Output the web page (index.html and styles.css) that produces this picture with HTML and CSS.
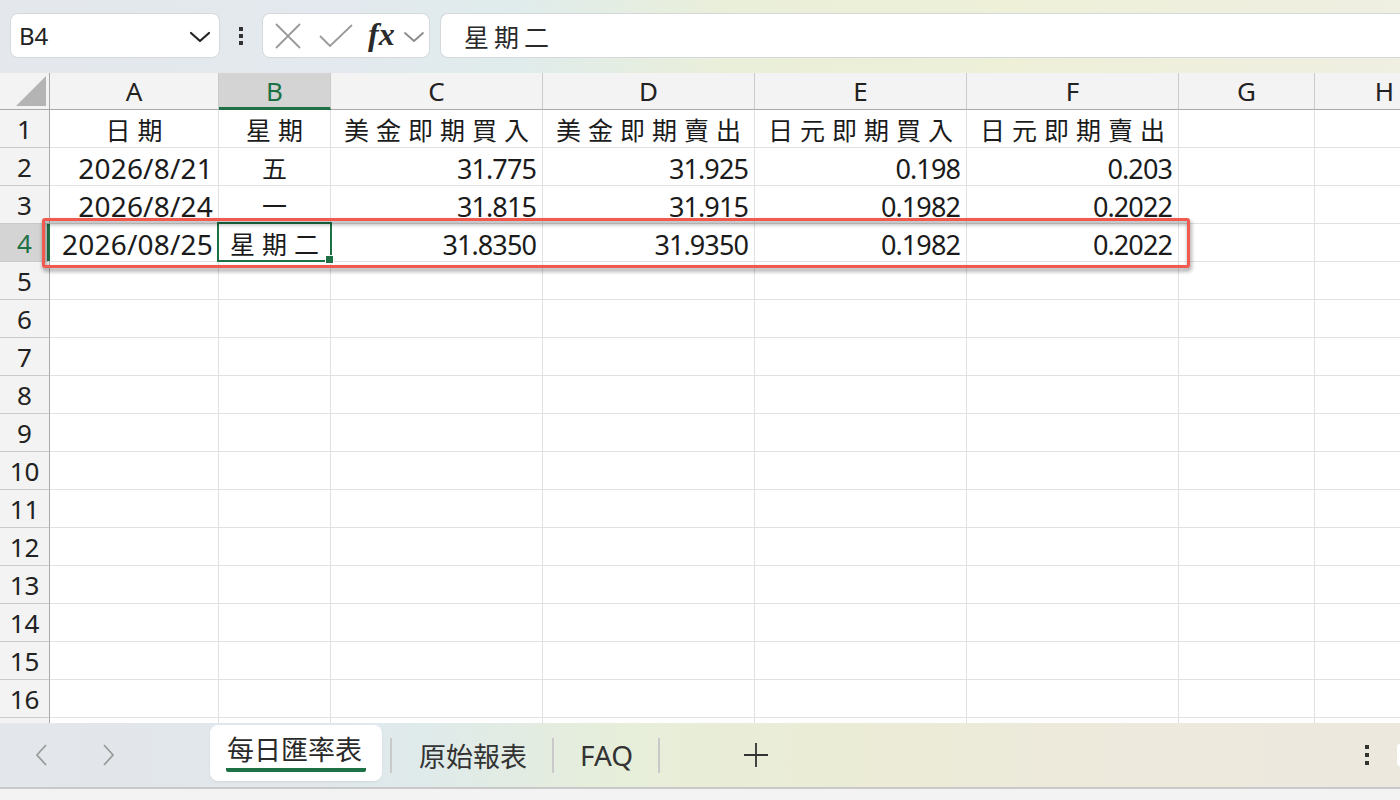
FILE: index.html
```html
<!DOCTYPE html>
<html lang="zh-Hant">
<head>
<meta charset="utf-8">
<title>每日匯率表</title>
<link rel="stylesheet" href="styles.css">
</head>
<body>
<div class="toolbar">
  <div class="namebox">
    <span class="nb-text">B4</span>
    <svg class="chev" width="22" height="14" viewBox="0 0 22 14"><path d="M2 3 L11 11 L20 3" fill="none" stroke="#222" stroke-width="2.2" stroke-linecap="round" stroke-linejoin="round"/></svg>
  </div>
  <div class="dots"><span></span><span></span><span></span></div>
  <div class="fxbox">
    <svg class="ico-x" width="28" height="28" viewBox="0 0 28 28"><path d="M2 2 L26 26 M26 2 L2 26" stroke="#9a9a9a" stroke-width="1.8" fill="none"/></svg>
    <svg class="ico-ok" width="36" height="26" viewBox="0 0 36 26"><path d="M2 13 L12 23 L34 2" stroke="#9a9a9a" stroke-width="1.8" fill="none"/></svg>
    <span class="fx">fx</span>
    <svg class="ico-dd" width="22" height="14" viewBox="0 0 22 14"><path d="M2 3 L11 11 L20 3" fill="none" stroke="#8a8a8a" stroke-width="1.8" stroke-linecap="round" stroke-linejoin="round"/></svg>
  </div>
  <div class="formula">星期二</div>
</div>

<div class="sheet">
  <div class="grid">
    <div class="corner"></div>
    <div class="ch">A</div><div class="ch sel">B</div><div class="ch">C</div><div class="ch">D</div><div class="ch">E</div><div class="ch">F</div><div class="ch">G</div><div class="ch">H</div>

    <div class="rh">1</div>
    <div class="c cjk">日期</div><div class="c cjk">星期</div><div class="c cjk">美金即期買入</div><div class="c cjk">美金即期賣出</div><div class="c cjk">日元即期買入</div><div class="c cjk">日元即期賣出</div><div class="c"></div><div class="c"></div>

    <div class="rh">2</div>
    <div class="c num">2026/8/21</div><div class="c cjk">五</div><div class="c num dec">31.775</div><div class="c num dec">31.925</div><div class="c num dec">0.198</div><div class="c num dec">0.203</div><div class="c"></div><div class="c"></div>

    <div class="rh">3</div>
    <div class="c num">2026/8/24</div><div class="c cjk">一</div><div class="c num dec">31.815</div><div class="c num dec">31.915</div><div class="c num dec">0.1982</div><div class="c num dec">0.2022</div><div class="c"></div><div class="c"></div>

    <div class="rh sel">4</div>
    <div class="c num">2026/08/25</div><div class="c cjk cursor">星期二</div><div class="c num dec">31.8350</div><div class="c num dec">31.9350</div><div class="c num dec">0.1982</div><div class="c num dec">0.2022</div><div class="c"></div><div class="c"></div>

    <div class="rh">5</div><div class="c"></div><div class="c"></div><div class="c"></div><div class="c"></div><div class="c"></div><div class="c"></div><div class="c"></div><div class="c"></div>
    <div class="rh">6</div><div class="c"></div><div class="c"></div><div class="c"></div><div class="c"></div><div class="c"></div><div class="c"></div><div class="c"></div><div class="c"></div>
    <div class="rh">7</div><div class="c"></div><div class="c"></div><div class="c"></div><div class="c"></div><div class="c"></div><div class="c"></div><div class="c"></div><div class="c"></div>
    <div class="rh">8</div><div class="c"></div><div class="c"></div><div class="c"></div><div class="c"></div><div class="c"></div><div class="c"></div><div class="c"></div><div class="c"></div>
    <div class="rh">9</div><div class="c"></div><div class="c"></div><div class="c"></div><div class="c"></div><div class="c"></div><div class="c"></div><div class="c"></div><div class="c"></div>
    <div class="rh">10</div><div class="c"></div><div class="c"></div><div class="c"></div><div class="c"></div><div class="c"></div><div class="c"></div><div class="c"></div><div class="c"></div>
    <div class="rh">11</div><div class="c"></div><div class="c"></div><div class="c"></div><div class="c"></div><div class="c"></div><div class="c"></div><div class="c"></div><div class="c"></div>
    <div class="rh">12</div><div class="c"></div><div class="c"></div><div class="c"></div><div class="c"></div><div class="c"></div><div class="c"></div><div class="c"></div><div class="c"></div>
    <div class="rh">13</div><div class="c"></div><div class="c"></div><div class="c"></div><div class="c"></div><div class="c"></div><div class="c"></div><div class="c"></div><div class="c"></div>
    <div class="rh">14</div><div class="c"></div><div class="c"></div><div class="c"></div><div class="c"></div><div class="c"></div><div class="c"></div><div class="c"></div><div class="c"></div>
    <div class="rh">15</div><div class="c"></div><div class="c"></div><div class="c"></div><div class="c"></div><div class="c"></div><div class="c"></div><div class="c"></div><div class="c"></div>
    <div class="rh">16</div><div class="c"></div><div class="c"></div><div class="c"></div><div class="c"></div><div class="c"></div><div class="c"></div><div class="c"></div><div class="c"></div>
    <div class="rh"></div><div class="c"></div><div class="c"></div><div class="c"></div><div class="c"></div><div class="c"></div><div class="c"></div><div class="c"></div><div class="c"></div>
  </div>
  <div class="highlight"></div>
</div>

<div class="tabbar">
  <svg class="nav prev" width="16" height="24" viewBox="0 0 16 24"><path d="M12 2 L3 12 L12 22" fill="none" stroke="#9b9b9b" stroke-width="1.8"/></svg>
  <svg class="nav next" width="16" height="24" viewBox="0 0 16 24"><path d="M4 2 L13 12 L4 22" fill="none" stroke="#9b9b9b" stroke-width="1.8"/></svg>
  <div class="tab current"><span>每日匯率表</span></div>
  <div class="sep"></div>
  <div class="tab">原始報表</div>
  <div class="sep"></div>
  <div class="tab faq">FAQ</div>
  <div class="sep"></div>
  <svg class="plus" width="26" height="26" viewBox="0 0 26 26"><path d="M13 1 V25 M1 13 H25" stroke="#333" stroke-width="1.8"/></svg>
  <div class="spacer"></div>
  <div class="vdots"><span></span><span></span><span></span></div>
  <div class="edge"></div>
</div>
<div class="status"></div>
</body>
</html>
```

FILE: styles.css
```css
* { box-sizing: border-box; }
html, body { margin: 0; padding: 0; }
body {
  width: 1400px;
  height: 800px;
  overflow: hidden;
  background: #f3f3f3;
  font-family: "Noto Sans", "Noto Sans CJK TC", sans-serif;
  color: #1b1b1b;
}

/* ---------- toolbar ---------- */
.toolbar {
  height: 73px;
  display: flex;
  align-items: flex-start;
  padding: 13px 0 0 10px;
  background: linear-gradient(90deg, #e4e8ed 0%, #e3e9ee 25%, #e0ecec 37%, #eaefd9 52%, #eef0d8 72%, #efefe2 100%);
}
.namebox {
  width: 210px;
  height: 45px;
  background: #fff;
  border: 1px solid #d5d8db;
  border-radius: 8px;
  display: flex;
  align-items: center;
  justify-content: space-between;
  padding: 0 8px 0 8px;
}
.nb-text { font-size: 24px; color: #222; }
.chev { margin-top: 2px; }
.dots {
  width: 42px;
  height: 45px;
  display: flex;
  flex-direction: column;
  align-items: center;
  justify-content: center;
  gap: 3px;
}
.dots span { width: 4px; height: 4px; background: #333; }
.fxbox {
  width: 168px;
  height: 45px;
  background: #fff;
  border: 1px solid #d5d8db;
  border-radius: 8px;
  display: flex;
  align-items: center;
  padding-left: 11px;
}
.ico-ok { margin-left: 16px; }
.fx {
  margin-left: 14px;
  font-family: "Liberation Serif", "DejaVu Serif", serif;
  font-style: italic;
  font-weight: bold;
  font-size: 32px;
  color: #2a2a2a;
  line-height: 1;
  margin-top: -4px;
}
.ico-dd { margin-left: 8px; margin-top: 2px; }
.formula {
  flex: 1;
  margin-left: 10px;
  height: 45px;
  background: #fff;
  border: 1px solid #d5d8db;
  border-right: none;
  border-radius: 8px 0 0 8px;
  display: flex;
  align-items: center;
  padding-left: 23px;
  font-family: "Noto Sans CJK TC", sans-serif;
  font-size: 25px;
  letter-spacing: 5px;
  color: #2a2a2a;
}

/* ---------- sheet ---------- */
.sheet {
  position: relative;
  height: 650px;
  overflow: hidden;
  background: #fff;
}
.grid {
  display: grid;
  grid-template-columns: 50px 169px 112px 212px 212px 212px 212px 136px 140px;
  grid-template-rows: 37px repeat(17, 38px);
}
.corner {
  position: relative;
  background: #f3f3f3;
  border-right: 1px solid #a9a9a9;
  border-bottom: 1px solid #a9a9a9;
}
.corner::after {
  content: "";
  position: absolute;
  right: 3px;
  bottom: 3px;
  width: 30px;
  height: 30px;
  background: #b4b4b4;
  clip-path: polygon(100% 0, 100% 100%, 0 100%);
}
.ch {
  background: #f3f3f3;
  border-right: 1px solid #cacaca;
  border-bottom: 1px solid #a9a9a9;
  display: flex;
  align-items: center;
  justify-content: center;
  font-size: 26px;
  color: #222;
}
.ch.sel {
  background: #d4d4d4;
  color: #1e7145;
  border-bottom: 3px solid #1e7145;
  padding-top: 2px;
}
.rh {
  position: relative;
  background: #f3f3f3;
  border-right: 1px solid #a9a9a9;
  border-bottom: 1px solid #cacaca;
  display: flex;
  align-items: center;
  justify-content: center;
  font-size: 26px;
  color: #222;
}
.rh.sel { background: #d4d4d4; color: #1e7145; }
.rh.sel::after {
  content: "";
  position: absolute;
  right: -1px;
  top: 0;
  bottom: 0;
  width: 3px;
  background: #1e7145;
}
.c {
  border-right: 1px solid #e1e1e1;
  border-bottom: 1px solid #e1e1e1;
  display: flex;
  align-items: center;
  white-space: nowrap;
  overflow: visible;
}
.num {
  justify-content: flex-end;
  padding-right: 5px;
  padding-top: 3px;
  font-size: 28px;
  letter-spacing: 0.2px;
  color: #1b1b1b;
}
.num.dec {
  font-size: 27px;
  letter-spacing: -0.9px;
  padding-right: 6px;
}
.cjk {
  justify-content: center;
  font-family: "Noto Sans CJK TC", sans-serif;
  font-size: 25px;
  letter-spacing: 7px;
  padding-left: 7px;
  color: #1b1b1b;
}
.cursor { position: relative; }
.cursor::before {
  content: "";
  position: absolute;
  left: -2px;
  top: -2px;
  right: -2px;
  bottom: -1px;
  border: 2px solid #1e7145;
}
.cursor::after {
  content: "";
  position: absolute;
  right: -4px;
  bottom: -3px;
  width: 7px;
  height: 7px;
  background: #1e7145;
  border: 1px solid #fff;
}
.highlight {
  position: absolute;
  left: 42px;
  top: 145px;
  width: 1148px;
  height: 50px;
  border: 3px solid #f05a4f;
  border-radius: 3px;
  filter: drop-shadow(1px 3px 2px rgba(0, 0, 0, 0.45));
}

/* ---------- tab bar ---------- */
.tabbar {
  height: 66px;
  display: flex;
  align-items: center;
  background: linear-gradient(90deg, #e3e6ea 0%, #e1e7eb 22%, #dfeaeb 30%, #e7eed9 45%, #ebecd6 60%, #ede9dc 80%, #ede8de 100%);
  border-bottom: 2px solid #c9c9c9;
  overflow: hidden;
}
.nav.prev { margin-left: 34px; }
.nav.next { margin-left: 50px; }
.tab {
  font-family: "Noto Sans CJK TC", sans-serif;
  font-size: 27px;
  color: #333;
  padding: 0 25px 0 27px;
}
.tab.current {
  align-self: flex-start;
  margin-top: 2px;
  margin-left: 94px;
  height: 56px;
  width: 172px;
  padding: 5px 16px 0 16px;
  background: #fff;
  border-radius: 8px;
  box-shadow: 0 1px 2px rgba(0, 0, 0, 0.08);
}
.tab.current span {
  display: block;
  line-height: 38px;
  padding-left: 1px;
  border-bottom: 4px solid #1e7145;
  border-radius: 2px;
  color: #2a2a2a;
}
.tab.faq {
  font-family: "Noto Sans", sans-serif;
  font-size: 28px;
  padding: 0 25px 0 26px;
}
.sep { width: 2px; height: 35px; background: #c9c9c9; }
.tab.current + .sep { margin-left: 8px; }
.plus { margin-left: 83px; }
.spacer { flex: 1; }
.vdots {
  display: flex;
  flex-direction: column;
  gap: 4px;
  margin-right: 28px;
}
.vdots span { width: 4px; height: 4px; background: #333; }
.edge {
  width: 3px;
  height: 22px;
  background: #fff;
  border-radius: 3px 0 0 3px;
}
.status { height: 12px; background: #f3f3f3; }
```
